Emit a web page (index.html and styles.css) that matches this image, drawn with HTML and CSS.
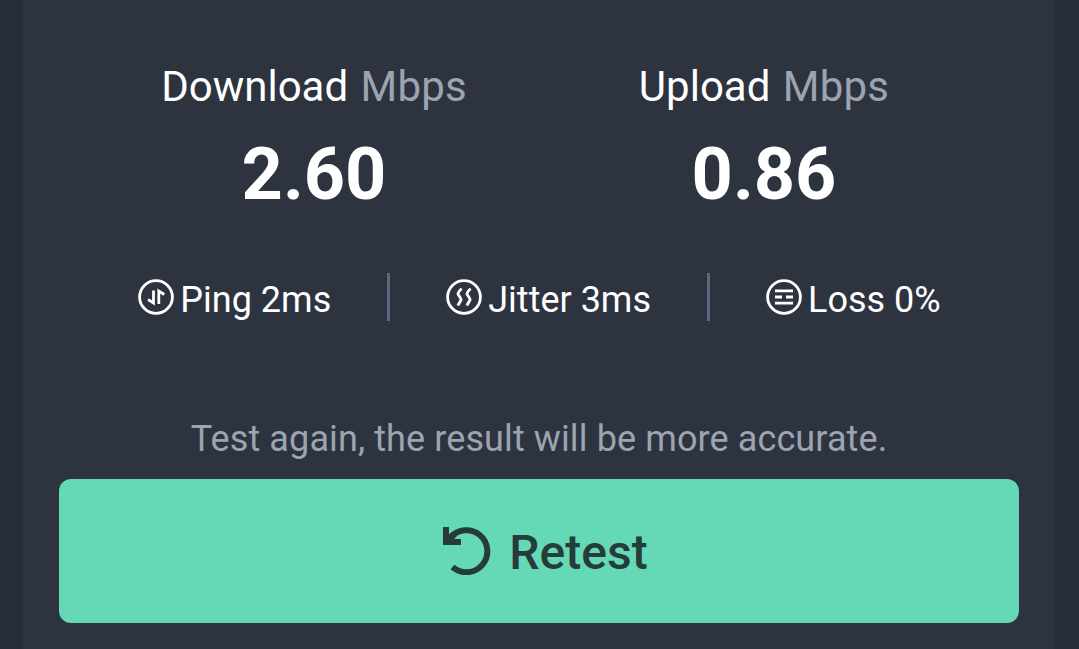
FILE: index.html
```
<!DOCTYPE html>
<html lang="en">
<head>
  <meta charset="UTF-8">
  <meta name="viewport" content="width=device-width, initial-scale=1.0">
  <title>Speed Test</title>
  <link rel="stylesheet" href="styles.css">
</head>
<body>
  <div class="card">
    <!-- speeds -->
    <div class="speeds">
      <div class="speed">
        <div class="speed-label">Download <span class="unit">Mbps</span></div>
        <div class="speed-value">2.60</div>
      </div>
      <div class="speed">
        <div class="speed-label">Upload <span class="unit">Mbps</span></div>
        <div class="speed-value">0.86</div>
      </div>
    </div>

    <!-- ping / jitter / loss -->
    <div class="stats">
      <div class="stat">
        <svg class="stat-icon" viewBox="0 0 38 38">
          <circle cx="19" cy="19" r="16.4"/>
          <path d="M16.500 12.500v12.500L11 21.500M21.800 26V13l5.500 3.500"/>
        </svg>
        <span class="stat-text">Ping 2ms</span>
      </div>
      <div class="divider"></div>
      <div class="stat">
        <svg class="stat-icon" viewBox="0 0 38 38">
          <circle cx="19" cy="19" r="16.4"/>
          <path d="M16.500 10.500l-2.800 3.500q-1.200 1.500-.2 3l2 3q1 1.500 0 3L12.800 27.500M25.500 10.500l-2.800 3.500q-1.200 1.500-.2 3l2 3q1 1.500 0 3L21.800 27.500"/>
        </svg>
        <span class="stat-text">Jitter 3ms</span>
      </div>
      <div class="divider"></div>
      <div class="stat">
        <svg class="stat-icon" viewBox="0 0 38 38">
          <circle cx="19" cy="19" r="16.4"/>
          <path d="M10 12.800h18M10 19h7M21 19h7M10 25.200h18"/>
        </svg>
        <span class="stat-text">Loss 0%</span>
      </div>
    </div>

    <p class="hint">Test again, the result will be more accurate.</p>
    <button class="retest">
      <svg class="retest-icon" viewBox="0 0 48 48">
        <path class="arc" d="M7 11A21 21 0 1 1 9.500 40"/>
        <path class="head" d="M0 0h6v8l3-3 5 4-3 3h7v6H0z"/>
      </svg>
      <span class="retest-text">Retest</span>
    </button>
  </div>
</body>
</html>
```
FILE: styles.css
```
body {
  margin: 0;
  background-color: #262d39;
  font-family: Roboto, "Liberation Sans", sans-serif;
  color: #fff;
}
.card {
  box-sizing: border-box;
  width: 1032px;
  height: 649px;
  margin: 0 auto 0 23px;
  padding: 62px 36px 0;
  background-color: #2d3440;
}
.speeds {
  display: flex;
  padding: 0 30px;
}
.speed {
  flex: 1;
  text-align: center;
}
.speed-label {
  font-size: 42px;
  line-height: 50px;
}
.unit {
  margin-left: 2px;
  color: #9ca4b0;
  letter-spacing: 0.2px;
}
.speed-value {
  margin-top: 21px;
  font-size: 72px;
  font-weight: bold;
  line-height: 84px;
}
.stats {
  display: flex;
  justify-content: center;
  align-items: center;
  gap: 55.5px;
  height: 48px;
  margin-top: 56px;
}
.stat {
  display: flex;
  align-items: center;
  gap: 5px;
}
.stat-icon {
  width: 38px;
  height: 38px;
  fill: none;
  stroke: #fff;
  stroke-width: 2.8;
}
.stat-text {
  padding-top: 6px;
  font-size: 36px;
  line-height: 42px;
}
.divider {
  width: 3px;
  height: 48px;
  background-color: #5a6880;
}
.hint {
  margin: 97px 0 0;
  font-size: 36px;
  line-height: 42px;
  letter-spacing: 0.11px;
  text-align: center;
  color: #9ca4b0;
}
.retest {
  display: flex;
  justify-content: center;
  align-items: center;
  gap: 18px;
  width: 100%;
  height: 144px;
  margin-top: 19px;
  padding: 0 0 0 13px;
  border: none;
  border-radius: 12px;
  background-color: #65d8b6;
  color: #263c3a;
  font-family: inherit;
  font-size: 48px;
  font-weight: 500;
  cursor: pointer;
}
.retest-icon {
  width: 48px;
  height: 48px;
}
.arc {
  fill: none;
  stroke: #263c3a;
  stroke-width: 6;
}
.head {
  fill: #263c3a;
}
.retest-text {
  padding-top: 2px;
}
```
